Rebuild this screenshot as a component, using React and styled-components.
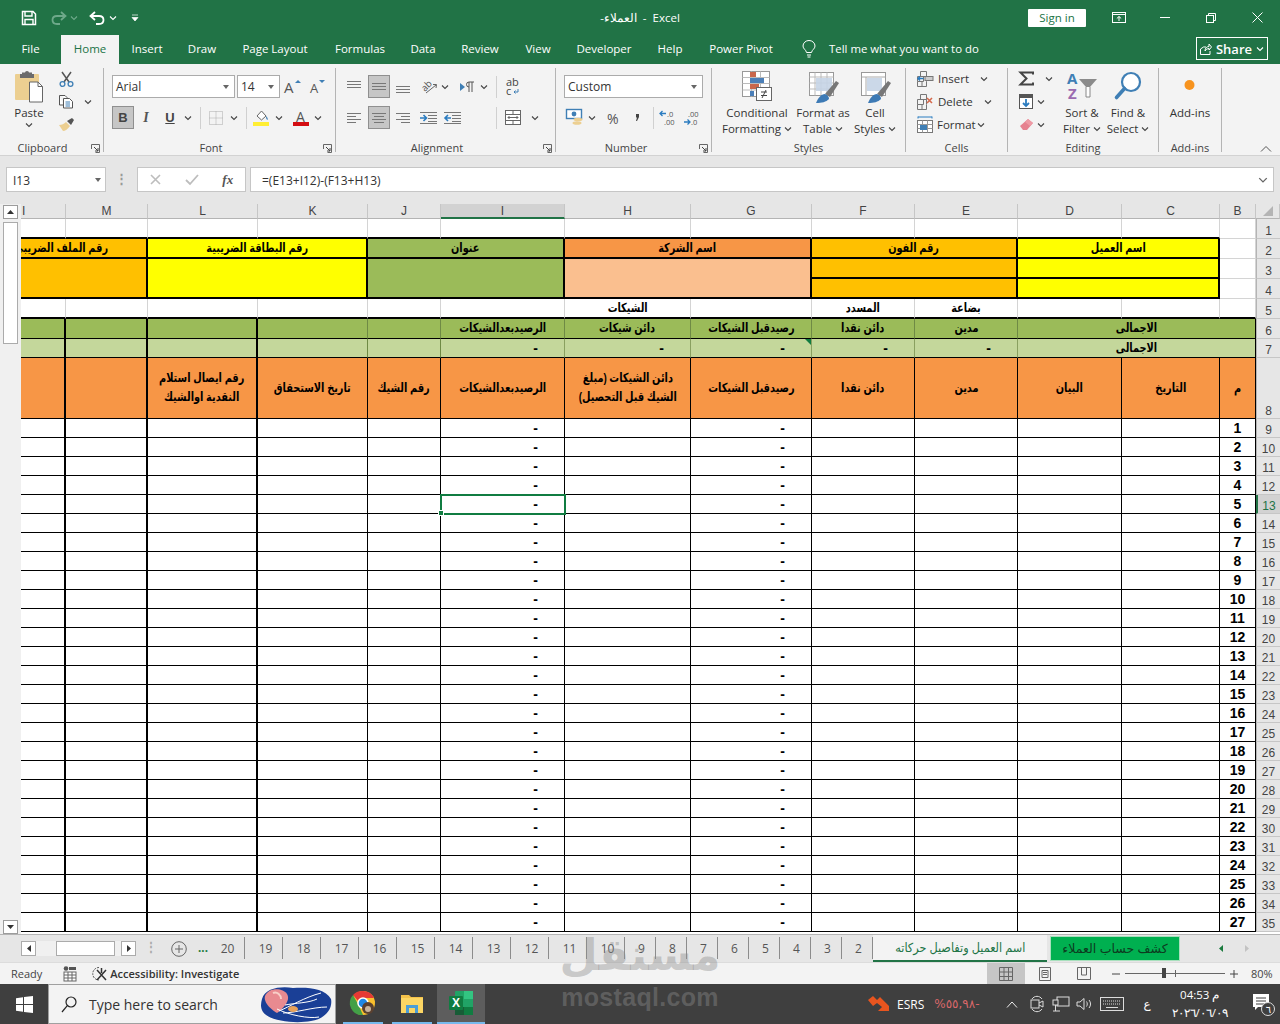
import React from "react";
import styled, { createGlobalStyle } from "styled-components";

const UI = `"Open Sans","Noto Sans",sans-serif`;
const AR = `"Liberation Sans","DejaVu Sans","Noto Sans",sans-serif`;
const GREEN = "#217346";

const Global = createGlobalStyle`
  html, body { margin: 0; padding: 0; background: #e6e6e6; }
  * { box-sizing: border-box; }
`;

const Page = styled.div`
  position: relative; width: 1280px; height: 1024px; overflow: hidden;
  display: flex; flex-direction: column; font-family: ${UI}; color: #333; font-size: 11.5px; background: #e6e6e6;
`;
const Ico = styled.svg`display: block; flex-shrink: 0; overflow: visible;`;
const Chev = ({ c = "#444", s = 8 }) => (
  <Ico width={s} height={s} viewBox="0 0 8 8"><path d="M1 2.5 4 5.5 7 2.5" fill="none" stroke={c} strokeWidth="1.1" /></Ico>
);

/* ---------- title bar ---------- */
const TitleBar = styled.div`
  height: 35px; background: ${GREEN}; color: #fff; display: grid; grid-template-columns: 1fr auto 1fr; align-items: center;
`;
const Qat = styled.div`display: flex; align-items: center; padding-left: 20px;`;
const Tool = styled.div`
  display: flex; align-items: center; justify-content: center; flex-shrink: 0; height: ${p => p.$h || 23}px;
  width: ${p => p.$w || 20}px; margin-left: ${p => p.$ml || 0}px; color: #444;
  ${p => p.$on && `background: #c6c6c6; border: 1px solid #8f8f8f;`}
`;
const DocTitle = styled.div`font: 11.5px ${UI}; color: #fff; direction: ltr; unicode-bidi: plaintext; white-space: pre;`;
const WinCtl = styled.div`display: flex; align-items: center; justify-content: flex-end;`;
const SignIn = styled.div`
  width: 58px; height: 18px; background: #fff; color: ${GREEN}; font-size: 11.5px; line-height: 18px; text-align: center; border-radius: 1px; margin-right: 10px;
`;
const WinBtn = styled.div`width: 46px; height: 30px; display: flex; align-items: center; justify-content: center;`;

/* ---------- tabs ---------- */
const Tabs = styled.div`height: 29px; background: ${GREEN}; display: flex; align-items: stretch;`;
const Tab = styled.div`
  width: ${p => p.$w}px; display: flex; align-items: center; justify-content: center; font-size: 11.5px; padding-bottom: 2px;
  color: ${p => (p.$on ? GREEN : "#fff")}; background: ${p => (p.$on ? "#f3f3f3" : "transparent")};
`;
const TellMe = styled.div`display: flex; align-items: center; gap: 13px; margin-left: 15px; color: #fff; font-size: 11.4px; padding-bottom: 2px;`;
const Share = styled.div`
  margin: 2px 12px 4px auto; width: 72px; height: 23px; border: 1px solid #fff; color: #fff; font-weight: 600; font-size: 13px;
  display: flex; align-items: center; justify-content: center; gap: 4px;
`;

/* ---------- ribbon ---------- */
const Ribbon = styled.div`height: 92px; background: #f3f3f3; display: flex; align-items: center; position: relative; border-bottom: 1px solid #d2d2d2;`;
const Group = styled.div`width: ${p => p.$w}px; height: 91px; display: flex; flex-direction: column; flex-shrink: 0;`;
const GroupBody = styled.div`flex: 1; display: flex; padding-left: ${p => p.$pl || 0}px; min-height: 0;`;
const GroupLabel = styled.div`
  height: 17px; position: relative; text-align: center; font-size: 11px; color: #444; line-height: 19px; padding-right: ${p => p.$pr || 0}px;
`;
const Launcher = styled.span`position: absolute; right: 3px; top: 6px;`;
const Divider = styled.div`width: 1px; height: 84px; background: #b4b4b4; flex-shrink: 0;`;
const Rows = styled.div`display: flex; flex-direction: column; gap: 8px; padding-top: 11px;`;
const Row = styled.div`display: flex; align-items: center; height: 23px;`;
const Stack = styled.div`display: flex; flex-direction: column; padding-top: 3px; width: ${p => p.$w}px; flex-shrink: 0;`;
const Sep = styled.div`width: 1px; height: 22px; background: #d0d0d0; flex-shrink: 0; margin-left: ${p => p.$ml || 0}px;`;
const Field = styled.div`
  width: ${p => p.$w}px; height: 23px; margin-left: ${p => p.$ml || 0}px; background: #fff; border: 1px solid #ababab; flex-shrink: 0;
  display: flex; align-items: center; justify-content: space-between; padding: 0 5px 0 3px; font-size: 12px; color: #333;
`;
const Caret = styled.span`width: 0; height: 0; border-left: 3.5px solid transparent; border-right: 3.5px solid transparent; border-top: 4px solid #666;`;
const Large = styled.div`
  width: ${p => p.$w}px; margin-left: ${p => p.$ml || 0}px; flex-shrink: 0; display: flex; flex-direction: column; align-items: center;
  padding-top: 7px; font-size: 11.5px; line-height: 16px; color: #333; text-align: center; white-space: nowrap;
`;
const LargeIcon = styled.div`height: 34px; display: flex; align-items: flex-start; justify-content: center;`;
const LineChev = styled.div`display: flex; align-items: center; gap: 3px; justify-content: center;`;
const SmallText = styled.span`width: ${p => p.$w}px; margin-left: 4px; font-size: 11.5px; flex-shrink: 0;`;
const Bold = styled.span`font: 700 13px "Liberation Sans", sans-serif; color: #444;`;
const Ital = styled.span`font: italic 700 14px "Liberation Serif", serif; color: #555;`;
const Under = styled.span`font: 700 13px "Liberation Sans", sans-serif; color: #444; text-decoration: underline;`;
const Collapse = styled.div`position: absolute; right: 8px; bottom: 2px;`;

/* ---------- formula ---------- */
const FormulaBar = styled.div`height: 48px; background: #e6e6e6; padding: 11px 6px 12px 6px; display: flex; align-items: stretch;`;
const NameBox = styled.div`
  width: 100px; background: #fff; border: 1px solid #c6c6c6; display: flex; align-items: center; justify-content: space-between;
  padding: 1px 4px 0 6px; font: 12px ${UI}; color: #333;
`;
const Dots = styled.div`width: 31px; color: #999; text-align: center; font-size: 13px; font-weight: 700; line-height: 22px;`;
const FxBox = styled.div`width: 109px; background: #fff; border: 1px solid #c6c6c6; display: flex; align-items: center; justify-content: space-around;`;
const Fx = styled.span`font: italic 700 13px "Liberation Serif", serif; color: #555;`;
const Formula = styled.div`
  flex: 1; margin-left: 4px; background: #fff; border: 1px solid #c6c6c6; display: flex; align-items: center; justify-content: space-between;
  padding: 1px 5px 0 11px; font: 12px ${UI}; color: #333;
`;

/* ---------- sheet ---------- */
const SheetWrap = styled.div`display: flex; height: 730px;`;
const VScroll = styled.div`width: 21px; flex-shrink: 0; padding: 1px 0 0 3px; display: flex; flex-direction: column; background: #f0f0f0; position: relative;`;
const SBtn = styled.div`width: 15px; height: 14px; background: #fff; border: 1px solid #9c9c9c; display: flex; align-items: center; justify-content: center;`;
const Thumb = styled.div`width: 15px; height: 122px; margin-top: 3px; background: #fff; border: 1px solid #ababab; flex-shrink: 0;`;
const SDown = styled(SBtn)`margin-top: auto; margin-bottom: 0;`;
const COLS = [45, 82, 110, 110, 73, 124, 126, 121, 103, 103, 104, 98, 36, 24];
const ROWS = [15, 20, 20, 20, 20, 20, 20, 19, 61, ...Array(27).fill(19)];
const Grid = styled.div`
  flex: 1; overflow: hidden; background: #fff; display: grid;
  grid-template-columns: ${COLS.map(c => c + "px").join(" ")};
  grid-template-rows: ${ROWS.map(c => c + "px").join(" ")};
`;
const ColHead = styled.div`
  background: ${p => (p.$on ? "#d2d2d2" : "#e6e6e6")}; border-right: 1px solid #c6c6c6;
  border-bottom: ${p => (p.$on ? `2px solid ${GREEN}` : "1px solid #b4b4b4")};
  font: 12px "Liberation Sans", sans-serif; color: #444; display: flex; align-items: center;
  justify-content: ${p => (p.$left ? "flex-start" : "center")}; padding-left: ${p => (p.$left ? 1 : 0)}px; line-height: 14px;
`;
const RowHead = styled.div`
  background: ${p => (p.$on ? "#d2d2d2" : "#e6e6e6")}; border-bottom: 1px solid #c6c6c6; border-left: ${p => (p.$on ? `2px solid ${GREEN}` : "1px solid #b4b4b4")};
  font: 12px "Liberation Sans", sans-serif; color: ${p => (p.$on ? GREEN : "#444")}; display: flex; align-items: flex-end; justify-content: center;
`;
const LIGHT = "1px solid #d4d4d4";
const THIN = "1px solid #000";
const THICK = "2px solid #000";
const Cell = styled.div`
  grid-column: span ${p => p.$span || 1}; grid-row: span ${p => p.$rows || 1}; position: relative; overflow: hidden;
  background: ${p => p.$bg || "#fff"}; border-right: ${p => p.$br || LIGHT}; border-bottom: ${p => p.$bb || LIGHT};
  display: flex; align-items: center; justify-content: ${p => p.$just || "center"}; direction: rtl; text-align: center;
  font: 700 12.5px/19px ${AR}; color: #000; white-space: nowrap; padding-right: ${p => p.$pr || 0}px;
`;
const Txt = styled.span`
  display: inline-block; flex-shrink: 0; transform: scaleX(${p => p.$sx || 0.78}); transform-origin: ${p => p.$origin || "center"};
`;
const Dash = styled(Cell)`justify-content: flex-start; padding-right: 26px; font: 700 14px "Liberation Sans", sans-serif;`;
const Num = styled(Cell)`font: 700 14px "Liberation Sans", sans-serif; direction: ltr;`;
const Selected = styled(Cell)`overflow: visible; outline: 2px solid #107c41; outline-offset: -1px; z-index: 2; justify-content: flex-start; padding-right: 26px; font: 700 14px "Liberation Sans", sans-serif;`;
const Handle = styled.span`position: absolute; left: -3px; bottom: -3px; width: 6px; height: 6px; background: #107c41; border: 1px solid #fff;`;
const Tri = styled.span`position: absolute; right: 0; top: 0; width: 0; height: 0; border-top: 6px solid #107c41; border-left: 6px solid transparent;`;

const Y = "#ffff00", O = "#ffc000", G = "#9bbb59", F = "#f79646", P = "#fabf8f", LG = "#c4d79b";
const letters = ["I", "M", "L", "K", "J", "I", "H", "G", "F", "E", "D", "C", "B"];
const headTexts8 = [
  "", "", <>رقم ايصال استلام<br />النقدية اوالشيك</>, "تاريخ الاستحقاق", "رقم الشيك", "الرصيدبعدالشيكات",
  <>دائن الشيكات (مبلغ<br />الشيك قبل التحصيل)</>, "رصيدقبل الشيكات", "دائن نقدا", "مدين", "البيان", "التاريخ", "م",
];
const vert = i => (i <= 2 ? THICK : THIN);
const vertSoft = i => (i <= 2 ? THICK : "1px solid #6f8a45");

const SheetGrid = () => (
  <Grid>
    {letters.map((l, i) => <ColHead key={i} $on={i === 5} $left={i === 0}>{l}</ColHead>)}
    <ColHead>
      <Ico width="12" height="12" viewBox="0 0 12 12"><path d="M11 1V11H1Z" fill="#b4b4b4" /></Ico>
    </ColHead>

    {/* row 1 */}
    {[...Array(12)].map((_, i) => <Cell key={i} $bb={THICK} />)}
    <Cell /><RowHead>1</RowHead>

    {/* row 2 */}
    <Cell $span={2} $bg={O} $br={THICK} $bb={THICK} $just="flex-start" $pr={38}><Txt $origin="right">رقم الملف الضريبي</Txt></Cell>
    <Cell $span={2} $bg={Y} $br={THICK} $bb={THICK}><Txt>رقم البطاقة الضريبية</Txt></Cell>
    <Cell $span={2} $bg={G} $br={THICK} $bb={THICK}><Txt>عنوان</Txt></Cell>
    <Cell $span={2} $bg={F} $br={THICK} $bb={THICK}><Txt>اسم الشركة</Txt></Cell>
    <Cell $span={2} $bg={O} $br={THICK} $bb={THICK}><Txt>رقم الفون</Txt></Cell>
    <Cell $span={2} $bg={Y} $br={THICK} $bb={THICK}><Txt>اسم العميل</Txt></Cell>
    <Cell /><RowHead>2</RowHead>

    {/* rows 3-4 */}
    <Cell $span={2} $rows={2} $bg={O} $br={THICK} $bb={THICK} />
    <Cell $span={2} $rows={2} $bg={Y} $br={THICK} $bb={THICK} />
    <Cell $span={2} $rows={2} $bg={G} $br={THICK} $bb={THICK} />
    <Cell $span={2} $rows={2} $bg={P} $br={THICK} $bb={THICK} />
    <Cell $span={2} $bg={O} $br={THICK} $bb={THICK} />
    <Cell $span={2} $bg={Y} $br={THICK} $bb={THICK} />
    <Cell /><RowHead>3</RowHead>
    <Cell $span={2} $bg={O} $br={THICK} $bb={THICK} />
    <Cell $span={2} $bg={Y} $br={THICK} $bb={THICK} />
    <Cell /><RowHead>4</RowHead>

    {/* row 5 */}
    {["", "", "", "", "", "", "الشيكات", "", "المسدد", "بضاعة", "", "", ""].map((t, i) => <Cell key={i} $bb={THICK}>{t && <Txt>{t}</Txt>}</Cell>)}
    <RowHead>5</RowHead>

    {/* row 6 */}
    {["", "", "", "", "", "الرصيدبعدالشيكات", "دائن شيكات", "رصيدقبل الشيكات", "دائن نقدا", "مدين"].map((t, i) => (
      <Cell key={i} $bg={G} $bb={THIN} $br={vertSoft(i)}>{t && <Txt>{t}</Txt>}</Cell>
    ))}
    <Cell $span={3} $bg={G} $bb={THIN} $br={THIN}><Txt>الاجمالى</Txt></Cell>
    <RowHead>6</RowHead>

    {/* row 7 */}
    {[0, 1, 2, 3, 4].map(i => <Cell key={i} $bg={LG} $bb={THIN} $br={vertSoft(i)} />)}
    <Dash $bg={LG} $bb={THIN} $br="1px solid #8aa060">-</Dash>
    <Dash $bg={LG} $bb={THIN} $br="1px solid #8aa060">-</Dash>
    <Dash $bg={LG} $bb={THIN} $br="1px solid #8aa060"><Tri />-</Dash>
    <Dash $bg={LG} $bb={THIN} $br="1px solid #8aa060">-</Dash>
    <Dash $bg={LG} $bb={THIN} $br="1px solid #8aa060">-</Dash>
    <Cell $span={3} $bg={LG} $bb={THIN} $br={THIN}><Txt>الاجمالى</Txt></Cell>
    <RowHead>7</RowHead>

    {/* row 8 */}
    {headTexts8.map((t, i) => <Cell key={i} $bg={F} $bb={THIN} $br={vert(i)}>{t && <Txt>{t}</Txt>}</Cell>)}
    <RowHead>8</RowHead>

    {/* data */}
    {[...Array(27)].map((_, r) => (
      <React.Fragment key={r}>
        {letters.map((_, i) => {
          if (i === 12) return <Num key={i} $bb={THIN} $br={THIN}>{r + 1}</Num>;
          if (i === 5 && r === 4) return <Selected key={i} $bb={THIN} $br={THIN}><Handle />-</Selected>;
          if (i === 5 || i === 7) return <Dash key={i} $bb={THIN} $br={THIN}>-</Dash>;
          return <Cell key={i} $bb={THIN} $br={vert(i)} />;
        })}
        <RowHead $on={r === 4}>{r + 9}</RowHead>
      </React.Fragment>
    ))}
  </Grid>
);

/* ---------- sheet tabs ---------- */
const TabBar = styled.div`height: 28px; background: #e6e6e6; border-top: 1px solid #b4b4b4; display: flex; align-items: stretch; padding-left: 21px;`;
const NavBox = styled.div`width: 15px; height: 15px; margin-top: 6px; background: #fff; border: 1px solid #ababab; display: flex; align-items: center; justify-content: center; flex-shrink: 0;`;
const HTrack = styled.div`width: 85px; height: 15px; margin-top: 6px; background: #f0f0f0; padding-left: 20px; flex-shrink: 0;`;
const HThumb = styled.div`width: 59px; height: 15px; background: #fff; border: 1px solid #ababab;`;
const TabDots = styled.div`width: 30px; color: #aaa; text-align: center; line-height: 24px; font-weight: 700; flex-shrink: 0;`;
const More = styled.div`width: 20px; text-align: center; color: #1a7a3d; font-weight: 700; line-height: 26px; margin: 0 -6px 0 6px; flex-shrink: 0;`;
const NumTab = styled.div`
  width: ${p => p.$w}px; flex-shrink: 0; height: 22px; margin-top: 2px; border-right: 1px solid #8c8c8c;
  display: flex; align-items: center; justify-content: center; padding-left: ${p => p.$pl}px; font: 12px ${UI}; color: #555;
`;
const ActiveTab = styled.div`
  width: 174px; flex-shrink: 0; height: 27px; background: #f3f3f3; border-bottom: 2px solid ${GREEN}; color: ${GREEN};
  display: flex; align-items: center; justify-content: center; font: 12.5px ${AR}; direction: rtl; white-space: nowrap;
`;
const ColorTab = styled.div`
  width: 130px; margin-left: 3px; flex-shrink: 0; height: 25px; background: #00b050; border: 1px solid #a8e0bd; color: #0d3b1f; margin-top: 1px;
  display: flex; align-items: center; justify-content: center; font: 12.5px ${AR}; direction: rtl; white-space: nowrap;
`;
const TabArrows = styled.div`display: flex; gap: 22px; margin-left: 39px; align-items: center;`;

/* ---------- status bar ---------- */
const StatusBar = styled.div`height: 22px; background: #f3f3f3; display: flex; align-items: center; padding-left: 11px; font-size: 11px; color: #444; border-top: 1px solid #dcdcdc;`;
const Access = styled.div`display: flex; align-items: center; gap: 2px; margin-left: 15px; font-weight: 600; color: #333; font-size: 11px;`;
const Views = styled.div`margin-left: auto; display: flex; flex-shrink: 0;`;
const ViewBtn = styled.div`width: ${p => p.$w}px; height: 21px; display: flex; align-items: center; justify-content: center; background: ${p => (p.$on ? "#c6c6c6" : "transparent")}; flex-shrink: 0;`;
const ZoomMinus = styled.span`margin-left: 9px; display: flex;`;
const Slider = styled.div`width: 100px; height: 1px; background: #666; position: relative; margin: 0 5px;`;
const SliderThumb = styled.span`position: absolute; left: 37px; top: -5px; width: 4px; height: 10px; background: #444;`;
const SliderTick = styled.span`position: absolute; left: 50px; top: -3px; width: 1px; height: 7px; background: #666;`;
const Zoom = styled.span`margin-left: 13px; width: 29px; font-size: 11px; color: #444;`;

/* ---------- taskbar ---------- */
const Taskbar = styled.div`height: 40px; background: #3f3f3f; display: flex; align-items: stretch; color: #fff;`;
const StartBtn = styled.div`width: 48px; display: flex; align-items: center; justify-content: center; flex-shrink: 0;`;
const Search = styled.div`width: 288px; background: #f3f3f3; border: 1px solid #a0a0a0; display: flex; align-items: center; flex-shrink: 0; padding-left: 12px; color: #333; font: 14px ${UI}; gap: 12px;`;
const SearchText = styled.span`white-space: nowrap; width: 158px;`;
const TaskIcon = styled.div`
  width: ${p => p.$w}px; margin-left: ${p => p.$ml || 0}px; flex-shrink: 0; display: flex; align-items: center; justify-content: center;
  background: ${p => (p.$on ? "#5d5d5d" : "transparent")}; border-bottom: 2px solid #76b9ed;
`;
const Tray = styled.div`margin-left: 383px; display: flex; align-items: center; flex: 1;`;
const TrayText = styled.span`font: ${p => p.$fs || 12}px ${p => p.$f || UI}; color: ${p => p.$c || "#fff"}; margin-left: ${p => p.$ml || 0}px; white-space: nowrap; flex-shrink: 0;`;
const Clock = styled.div`margin-left: 16px; width: 66px; display: flex; flex-direction: column; align-items: center; font: 11.5px ${UI}; line-height: 18px; flex-shrink: 0;`;

/* ---------- watermark ---------- */
const Watermark = styled.div`
  position: absolute; left: 560px; top: 927px; width: 160px; pointer-events: none; text-align: center; color: rgba(140, 140, 140, 0.42);
  display: flex; flex-direction: column; align-items: center;
`;
const WmAr = styled.div`font: 700 44px/56px "DejaVu Sans", sans-serif; direction: rtl;`;
const WmEn = styled.div`font: 700 25px/28px "Liberation Sans", sans-serif; letter-spacing: .3px;`;

/* ---------- icons ---------- */
const W = "#fff";
const SaveI = () => <Ico width="16" height="16" viewBox="0 0 16 16"><path d="M1.5 1.5H12L14.5 4V14.5H1.5Z" fill="none" stroke={W} strokeWidth="1.5" /><path d="M4 1.5V6H11V1.5M4 14.5V9.5H12V14.5" fill="none" stroke={W} strokeWidth="1.4" /></Ico>;
const UndoI = ({ c = W, flip }) => <Ico width="16" height="14" viewBox="0 0 16 14" style={flip ? { transform: "scaleX(-1)" } : undefined}><path d="M6 1 1.5 5 6 9M2 5H10C13 5 14.5 7 14.5 9S13 13 10 13H7" fill="none" stroke={c} strokeWidth="1.8" /></Ico>;
const PasteI = () => (
  <Ico width="30" height="33" viewBox="0 0 30 33">
    <rect x="1" y="3" width="24" height="26" rx="1" fill="#eccf91" />
    <path d="M8 4H18V1.5H15A2 1.5 0 0 0 11 1.5H8Z" fill="#6b6b6b" /><rect x="6" y="3" width="14" height="4" fill="#6b6b6b" />
    <path d="M15.5 11H24L28.5 15.5V31H15.5Z" fill="#fff" stroke="#666" /><path d="M24 11V15.5H28.5" fill="none" stroke="#666" />
  </Ico>
);
const CutI = () => <Ico width="15" height="16" viewBox="0 0 15 16"><path d="M3 1 10 11M12 1 5 11" stroke="#555" strokeWidth="1.5" /><circle cx="3.5" cy="13" r="2.4" fill="none" stroke="#3f7fb5" strokeWidth="1.3" /><circle cx="11.5" cy="13" r="2.4" fill="none" stroke="#3f7fb5" strokeWidth="1.3" /></Ico>;
const CopyI = () => <Ico width="16" height="15" viewBox="0 0 16 15"><path d="M1.5 1.5H7L9 3.5V4M1.5 1.5V11H5" fill="#fff" stroke="#555" /><path d="M5.5 4.5H11.5L14.5 7.5V14H5.5Z" fill="#fff" stroke="#555" /><path d="M7.5 8H12M7.5 10H12M7.5 12H12" stroke="#3f7fb5" /></Ico>;
const BrushI = () => <Ico width="17" height="15" viewBox="0 0 17 15"><path d="M1 8C4 8 6 7 8 5L12 9C10 12 7 14 5 14Z" fill="#eccf91" /><path d="M9 4 13 8 16 3 14 1Z" fill="#555" /></Ico>;
const LaunchI = () => <Ico width="9" height="9" viewBox="0 0 9 9"><path d="M.5 5V.5H8.5V8.5H4.5" fill="none" stroke="#666" /><path d="M3 3 7 7M7 4V7H4" fill="none" stroke="#444" /></Ico>;
const GrowI = ({ up }) => <Ico width="18" height="15" viewBox="0 0 18 15"><text x={up ? 0 : 2} y="14" fontFamily="Open Sans" fontSize={up ? 15 : 13} fill="#555">A</text><path d={up ? "M11 4 14 1 17 4Z" : "M11 1H17L14 4Z"} fill="#3f7fb5" /></Ico>;
const BordersI = () => <Ico width="14" height="14" viewBox="0 0 14 14"><rect x=".5" y=".5" width="13" height="13" fill="none" stroke="#aaa" strokeDasharray="1 1" /><path d="M7 .5V13.5M.5 7H13.5" stroke="#aaa" strokeDasharray="1 1" /></Ico>;
const FillI = () => <Ico width="17" height="17" viewBox="0 0 17 17"><path d="M4 7 8.5 2 13 7 8.5 11Z" fill="#fff" stroke="#666" /><path d="M13 7C15 9 15 10 14.5 11 13 10 13 8.5 13 7Z" fill="#3f7fb5" /><rect y="13" width="16" height="4" fill="#ffee33" /></Ico>;
const ColorI = () => <Ico width="17" height="17" viewBox="0 0 17 17"><text x="3" y="12.5" fontFamily="Open Sans" fontSize="14" fill="#555">A</text><rect y="13" width="16" height="4" fill="#d40d12" /></Ico>;
const Lines = ({ ys, x1s, x2s, w = 14 }) => <Ico width={w} height="12" viewBox={`0 0 ${w} 12`}>{ys.map((y, i) => <line key={i} x1={x1s[i]} x2={x2s[i]} y1={y + .5} y2={y + .5} stroke="#777" />)}</Ico>;
const AlignLines = ({ kind }) => {
  const w = 14;
  if (kind === "left") return <Lines ys={[1, 4, 7, 10]} x1s={[0, 0, 0, 0]} x2s={[14, 9, 14, 9]} w={w} />;
  if (kind === "center") return <Lines ys={[1, 4, 7, 10]} x1s={[0, 2, 0, 2]} x2s={[14, 12, 14, 12]} w={w} />;
  if (kind === "right") return <Lines ys={[1, 4, 7, 10]} x1s={[0, 5, 0, 5]} x2s={[14, 14, 14, 14]} w={w} />;
  return <Lines ys={[2, 5, 8]} x1s={[0, 0, 0]} x2s={[14, 14, 14]} w={w} />;
};
const OrientI = () => <Ico width="17" height="17" viewBox="0 0 17 17"><text x="1" y="11" transform="rotate(-45 6 9)" fontFamily="Open Sans" fontSize="9.5" fill="#555">ab</text><path d="M5 15 15 7M12 6.5 15.5 6.5 15 10" fill="none" stroke="#666" /></Ico>;
const RtlI = () => <Ico width="16" height="12" viewBox="0 0 16 12"><path d="M1 2 6 6 1 10Z" fill="#3f7fb5" /><path d="M10 11V1H15M13 1V11M10 1A2.5 2.5 0 0 0 10 6" fill="none" stroke="#555" /></Ico>;
const WrapI = () => <Ico width="14" height="20" viewBox="0 0 14 20"><text x="0" y="9" fontFamily="Open Sans" fontSize="11" fill="#444">ab</text><text x="0" y="18" fontFamily="Open Sans" fontSize="11" fill="#444">c</text><path d="M12 12V15H8M9.5 13.5 8 15 9.5 16.5" fill="none" stroke="#3f7fb5" /></Ico>;
const IndentI = ({ out }) => <Ico width="17" height="12" viewBox="0 0 17 12"><path d="M0 .5H17M8 3.5H17M8 6.5H17M8 9.5H17M0 11.5H17" stroke="#777" /><path d={out ? "M7 6H1M4 3 1 6 4 9" : "M0 6H6M3.5 3 6.5 6 3.5 9"} fill="none" stroke="#2b7cc0" strokeWidth="1.6" /></Ico>;
const MergeI = () => <Ico width="16" height="15" viewBox="0 0 16 15"><rect x=".5" y=".5" width="15" height="14" fill="#fff" stroke="#666" /><path d="M.5 4.5H15.5M.5 10.5H15.5M8 .5V4.5M8 10.5V14.5M3 7.5H13M4.5 6 3 7.5 4.5 9M11.5 6 13 7.5 11.5 9" fill="none" stroke="#666" /></Ico>;
const CurrI = () => <Ico width="18" height="17" viewBox="0 0 18 17"><rect x=".5" y=".5" width="15" height="9" fill="#fff" stroke="#3f7fb5" strokeWidth="1.4" /><circle cx="8" cy="5" r="2.4" fill="#3f7fb5" /><ellipse cx="12" cy="10.5" rx="4.5" ry="1.8" fill="#eccf91" /><ellipse cx="11" cy="14" rx="4.5" ry="1.8" fill="#eccf91" /></Ico>;
const DecI = ({ inc }) => (
  <Ico width="17" height="16" viewBox="0 0 17 16">
    <text x={inc ? 7 : 4} y="7" fontFamily="Open Sans" fontSize="7.5" fill="#555">{inc ? ".0" : ".00"}</text>
    <text x={inc ? 4 : 7} y="15" fontFamily="Open Sans" fontSize="7.5" fill="#555">{inc ? ".00" : ".0"}</text>
    <path d={inc ? "M6 3.5H0M2.5 1 0 3.5 2.5 6" : "M0 12H6M3.5 9.5 6 12 3.5 14.5"} fill="none" stroke="#2b7cc0" strokeWidth="1.3" />
  </Ico>
);
const CondI = () => (
  <Ico width="31" height="31" viewBox="0 0 31 31">
    <rect x=".5" y=".5" width="27" height="25" fill="#fff" stroke="#999" />
    <path d="M9.5 .5V25.5M18.5 .5V25.5M.5 6.5H27.5M.5 12.5H27.5M.5 19H27.5" stroke="#bbb" />
    <rect x="8" y="1" width="6" height="5" fill="#c9674c" /><rect x="8" y="7" width="14" height="5" fill="#4b7fb8" />
    <rect x="8" y="13" width="9" height="5" fill="#c9674c" /><rect x="8" y="20" width="4" height="5" fill="#4b7fb8" />
    <rect x="14.5" y="16.5" width="15" height="13" fill="#fff" stroke="#666" /><path d="M19 21H25M19 24.5H25M24 19 20 27" stroke="#444" fill="none" />
  </Ico>
);
const TableI = ({ plain }) => (
  <Ico width="30" height="32" viewBox="0 0 30 32" style={{ marginTop: "1px", marginLeft: "2px" }}>
    <rect x=".5" y=".5" width="24" height="23" fill="#fff" stroke="#999" />
    {plain ? <path d="M.5 5H24.5M5 5V23.5" stroke="#aaa" /> : <path d="M.5 5H24.5M.5 11H24.5M.5 17H24.5M6 .5V23.5M12 .5V23.5M18 .5V23.5" stroke="#bbb" />}
    <rect x={plain ? 6 : 7} y="6" width={plain ? 15 : 16} height="13" fill="#c5d4e6" opacity=".9" />
    <path d="M16 22 27 9 30 11 21 25Z" fill="#777" />
    <path d="M7 31C9 26 12 22 16 22 19 23 20 25 20 27 17 30 13 31 7 31Z" fill="#3d7ab5" />
  </Ico>
);
const InsI = ({ mode }) => (
  <Ico width="17" height="16" viewBox="0 0 17 16">
    <path d="M3.5 .5H9.5V5.5H3.5ZM.5 5.5H6.5V10.5H.5ZM6.5 5.5H9.5V10.5M.5 10.5V15.5H9.5V10.5M5 10.5V15.5" fill="none" stroke="#777" />
    {mode === "ins" ? <><rect x="8" y="5.5" width="8" height="4" fill="#ccc" stroke="#777" /><path d="M1 7.5H6.5M3 5.5 1 7.5 3 9.5" fill="none" stroke="#2b7cc0" strokeWidth="1.4" /></> : <path d="M10 4 15 9M15 4 10 9" stroke="#d4694c" strokeWidth="1.6" />}
  </Ico>
);
const FmtI = () => <Ico width="16" height="17" viewBox="0 0 16 17"><path d="M1 1H15M1 .5V2.5M15 .5V2.5" stroke="#2b7cc0" /><rect x=".5" y="4.5" width="15" height="12" fill="#fff" stroke="#777" /><path d="M.5 8.5H15.5M.5 12.5H15.5M5.5 4.5V16.5M10.5 4.5V16.5" stroke="#999" /><rect x="3" y="9" width="7" height="5" fill="#3f7fb5" /></Ico>;
const SumI = () => <Ico width="15" height="15" viewBox="0 0 15 15"><path d="M14 3.5V1.5H1.5L7.5 7.5 1.5 13.5H14V11.5" fill="none" stroke="#444" strokeWidth="2" /></Ico>;
const FillDown = () => <Ico width="14" height="15" viewBox="0 0 14 15"><rect x=".5" y=".5" width="13" height="14" fill="#fff" stroke="#555" /><rect width="14" height="4" fill="#555" /><path d="M7 5V12M4 9 7 12 10 9" fill="none" stroke="#2b7cc0" strokeWidth="1.8" /></Ico>;
const EraserI = () => <Ico width="15" height="13" viewBox="0 0 15 13"><path d="M9 1 14 5 8 12H4L1 8Z" fill="#e6818f" /><path d="M9 1 14 5 11 8 6 4Z" fill="#ee9aa5" /></Ico>;
const SortI = () => (
  <Ico width="30" height="30" viewBox="0 0 30 30">
    <text x="0" y="13" fontFamily="Open Sans" fontWeight="700" fontSize="15" fill="#3f7fb5">A</text>
    <text x="1" y="28" fontFamily="Open Sans" fontWeight="700" fontSize="15" fill="#9b6bb0">Z</text>
    <path d="M12 8H30L23 16V26H19V16Z" fill="#8b8b8b" /><path d="M19 16V26H23V16" fill="#fff" stroke="#888" />
  </Ico>
);
const FindI = () => <Ico width="28" height="29" viewBox="0 0 28 29"><circle cx="17" cy="11" r="9" fill="#fff" stroke="#3f7fb5" strokeWidth="2.2" /><path d="M10.5 17.5 2.5 26.5" stroke="#3f7fb5" strokeWidth="3.6" strokeLinecap="round" /></Ico>;
const BulbI = () => <Ico width="14" height="18" viewBox="0 0 14 18"><path d="M4.5 12.5C4 9.5 1 9 1 6A6 5.5 0 0 1 13 6C13 9 10 9.5 9.5 12.5ZM5 15H9M5.5 17H8.5" fill="none" stroke="#fff" /></Ico>;
const ShareI = () => <Ico width="12" height="12" viewBox="0 0 12 12"><path d="M6 4H3.5L.5 6V11.5H10V8M5 8C5 5 7 3.5 9 3.5V1L11.5 4 9 7V5.5C7.5 5.5 6 6.5 5 8Z" fill="none" stroke="#fff" /></Ico>;
const AccI = () => <Ico width="16" height="16" viewBox="0 0 16 16"><path d="M7 1.5A6 6 0 1 0 7 14" fill="none" stroke="#555" strokeDasharray="2 1" /><path d="M5 4 14 14M14 4 5 14M9.5 2V7" stroke="#333" strokeWidth="1.5" /></Ico>;
const MacroI = () => <Ico width="14" height="16" viewBox="0 0 14 16"><rect x="1" y="6" width="12" height="9" fill="#fff" stroke="#666" /><path d="M1 9H13M1 12H13M5 6V15M9 6V15" stroke="#666" /><circle cx="3" cy="2.5" r="2.3" fill="#555" /><rect x="6" y="1" width="7" height="3" fill="#555" /></Ico>;
const WinLogo = () => <Ico width="17" height="17" viewBox="0 0 17 17"><path d="M0 2.3 7 1.3V8H0ZM8 1.1 17 0V8H8ZM0 9H7V15.7L0 14.7ZM8 9H17V17L8 15.9Z" fill="#fff" /></Ico>;
const SearchI = () => <Ico width="16" height="17" viewBox="0 0 16 17"><circle cx="10" cy="6" r="5" fill="none" stroke="#222" strokeWidth="1.2" /><path d="M6.3 9.7 1 16" stroke="#222" strokeWidth="1.2" /></Ico>;
const Jelly = () => (
  <Ico width="74" height="38" viewBox="0 0 74 38">
    <path d="M3 14C6 3 22 1 34 3 48 2 66 3 72 14 74 24 66 34 52 36 36 39 10 36 4 27 1 22 2 18 3 14Z" fill="#1a3f96" />
    <path d="M6 11C10 2 24 3 28 9 32 15 24 24 18 28 14 26 4 18 6 11Z" fill="#e88a90" />
    <path d="M14 8C18 6 22 10 22 14" fill="none" stroke="#f8cfc8" strokeWidth="2" />
    <path d="M20 26C30 22 46 12 62 8M24 28C36 28 54 22 68 22M18 24C30 30 50 34 60 32M26 20C36 18 50 18 58 14" fill="none" stroke="#fff" strokeWidth="1" />
    <ellipse cx="34" cy="24" rx="5" ry="3" fill="#e9a25a" />
  </Ico>
);
const ChromeI = () => (
  <Ico width="26" height="26" viewBox="0 0 26 26">
    <circle cx="13" cy="13" r="12" fill="#fbc02d" />
    <path d="M13 1A12 12 0 0 1 24 8H13A5 5 0 0 0 8 11L3 5A12 12 0 0 1 13 1Z" fill="#e53935" />
    <path d="M3 5 8.5 15 13 25A12 12 0 0 1 3 5Z" fill="#43a047" />
    <circle cx="13" cy="13" r="5" fill="#1e88e5" stroke="#fff" strokeWidth="1.5" />
    <circle cx="18" cy="18" r="6" fill="#5a4030" /><circle cx="18" cy="19" r="3" fill="#c9b49a" />
  </Ico>
);
const FolderI = () => <Ico width="22" height="20" viewBox="0 0 22 20"><path d="M0 2H8L10 4H22V20H0Z" fill="#f4c24a" /><rect y="5" width="22" height="15" fill="#fcd664" /><rect x="5" y="12" width="12" height="8" fill="#4b9ed8" /><rect x="8" y="15" width="6" height="5" fill="#fcd664" /></Ico>;
const ExcelI = () => (
  <Ico width="26" height="26" viewBox="0 0 26 26">
    <rect x="7" y="1" width="18" height="24" rx="1" fill="#21a366" /><rect x="16" y="1" width="9" height="8" fill="#33c481" /><rect x="16" y="17" width="9" height="8" fill="#107c41" /><rect x="7" y="17" width="9" height="8" fill="#185c37" />
    <rect x="1" y="6" width="14" height="14" rx="1" fill="#107c41" />
    <text x="4" y="17" fontFamily="Liberation Sans" fontWeight="700" fontSize="12" fill="#fff">X</text>
  </Ico>
);
const EsrsI = () => <Ico width="22" height="18" viewBox="0 0 22 18"><path d="M0 5 5 1 9 5 12 2 21 11V1L21 16H10L14 12 9 8 5 11Z" fill="#e8551f" /></Ico>;
const Meet = () => <Ico width="14" height="18" viewBox="0 0 14 18"><path d="M2 4A6 6 0 0 1 12 4M2 14A6 6 0 0 0 12 14" fill="none" stroke="#ddd" /><rect x="1" y="5" width="8" height="8" fill="none" stroke="#ddd" /><path d="M9 8 13 6V12L9 10" fill="none" stroke="#ddd" /></Ico>;
const NetI = () => <Ico width="18" height="16" viewBox="0 0 18 16"><rect x="5" y="1" width="12" height="9" fill="none" stroke="#ddd" /><rect x="1" y="4" width="5" height="5" fill="#3f3f3f" stroke="#ddd" /><path d="M3.5 9V15M1 15H8" stroke="#ddd" /></Ico>;
const VolI = () => <Ico width="18" height="14" viewBox="0 0 18 14"><path d="M1 5H4L8 1.5V12.5L4 9H1Z" fill="none" stroke="#ddd" /><path d="M10.5 4.5C11.5 6 11.5 8 10.5 9.5M13 3C15 5.5 15 8.5 13 11" fill="none" stroke="#ddd" /></Ico>;
const KeyI = () => <Ico width="24" height="14" viewBox="0 0 24 14"><rect x=".5" y=".5" width="23" height="13" fill="none" stroke="#ddd" /><path d="M3 4H21M3 7H21" stroke="#ddd" strokeDasharray="1 1" /><path d="M6 10.5H18" stroke="#ddd" /></Ico>;
const NoteI = () => <Ico width="22" height="24" viewBox="0 0 22 24"><path d="M0 2H16V15H5L2 18V15H0Z" fill="#fff" /><path d="M3 6H13M3 9H13M3 12H13" stroke="#3f3f3f" /><circle cx="15" cy="17" r="6.5" fill="#3f3f3f" stroke="#ddd" /><text x="12.8" y="20.5" fontFamily="DejaVu Sans" fontSize="10" fill="#fff">٦</text></Ico>;

const App = () => (
  <Page>
    <Global />
    <TitleBar>
      <Qat>
        <Tool $w={18}><SaveI /></Tool>
        <Tool $w={18} $ml={12}><UndoI c="#6ea98a" flip /></Tool>
        <Tool $w={8} $ml={2}><Chev c="#6ea98a" /></Tool>
        <Tool $w={20} $ml={9}><UndoI /></Tool>
        <Tool $w={8} $ml={2}><Chev c={W} /></Tool>
        <Tool $w={10} $ml={13}>
          <Ico width="8" height="8" viewBox="0 0 8 8"><path d="M1 1H7M1 3.5H7L4 7Z" fill={W} stroke={W} strokeWidth=".7" /></Ico>
        </Tool>
      </Qat>
      <DocTitle dir="ltr"><span dir="rtl">العملاء-</span>  -  Excel</DocTitle>
      <WinCtl>
        <SignIn>Sign in</SignIn>
        <WinBtn><Ico width="14" height="11" viewBox="0 0 14 11"><rect x=".5" y=".5" width="13" height="10" fill="none" stroke={W} /><path d="M.5 2.5H13.5M7 9V4.5M4.8 6.5 7 4.5 9.2 6.5" fill="none" stroke={W} /></Ico></WinBtn>
        <WinBtn><Ico width="10" height="1" viewBox="0 0 10 1"><rect width="10" height="1" fill={W} /></Ico></WinBtn>
        <WinBtn><Ico width="10" height="10" viewBox="0 0 10 10"><rect x=".5" y="2.5" width="7" height="7" fill="none" stroke={W} /><path d="M2.5 2.5V.5H9.5V7.5H7.5" fill="none" stroke={W} /></Ico></WinBtn>
        <WinBtn><Ico width="11" height="11" viewBox="0 0 11 11"><path d="M.5.5 10.5 10.5M10.5.5.5 10.5" stroke={W} /></Ico></WinBtn>
      </WinCtl>
    </TitleBar>

    <Tabs>
      <Tab $w={61}>File</Tab>
      <Tab $w={58} $on>Home</Tab>
      <Tab $w={56}>Insert</Tab>
      <Tab $w={54}>Draw</Tab>
      <Tab $w={92}>Page Layout</Tab>
      <Tab $w={78}>Formulas</Tab>
      <Tab $w={48}>Data</Tab>
      <Tab $w={66}>Review</Tab>
      <Tab $w={50}>View</Tab>
      <Tab $w={82}>Developer</Tab>
      <Tab $w={50}>Help</Tab>
      <Tab $w={92}>Power Pivot</Tab>
      <TellMe><BulbI />Tell me what you want to do</TellMe>
      <Share><ShareI />Share<Chev c={W} /></Share>
    </Tabs>

    <Ribbon>
      <Group $w={103}>
        <GroupBody $pl={14}>
          <Large $w={30}>
            <LargeIcon><PasteI /></LargeIcon>
            <span>Paste</span>
            <Chev />
          </Large>
          <Stack $w={30}>
            <Tool $w={30} $ml={7}><CutI /></Tool>
            <Tool $w={30} $ml={7}><CopyI /></Tool>
            <Tool $w={30} $ml={7}><BrushI /></Tool>
          </Stack>
          <Stack $w={10}>
            <Tool $w={10} $ml={9} />
            <Tool $w={10} $ml={9}><Chev /></Tool>
          </Stack>
        </GroupBody>
        <GroupLabel $pr={18}>Clipboard<Launcher><LaunchI /></Launcher></GroupLabel>
      </Group>
      <Divider />

      <Group $w={231}>
        <GroupBody $pl={8}>
          <Rows>
            <Row>
              <Field $w={123}>Arial<Caret /></Field>
              <Field $w={43} $ml={2}>14<Caret /></Field>
              <Tool $w={20} $ml={3}><GrowI up /></Tool>
              <Tool $w={20} $ml={4}><GrowI /></Tool>
            </Row>
            <Row>
              <Tool $w={22} $on><Bold>B</Bold></Tool>
              <Tool $w={24}><Ital>I</Ital></Tool>
              <Tool $w={24}><Under>U</Under></Tool>
              <Tool $w={12}><Chev /></Tool>
              <Sep $ml={6} />
              <Tool $w={18} $ml={6}><BordersI /></Tool>
              <Tool $w={18}><Chev /></Tool>
              <Sep $ml={3} />
              <Tool $w={18} $ml={5}><FillI /></Tool>
              <Tool $w={18}><Chev /></Tool>
              <Tool $w={26}><ColorI /></Tool>
              <Tool $w={8}><Chev /></Tool>
            </Row>
          </Rows>
        </GroupBody>
        <GroupLabel $pr={17}>Font<Launcher><LaunchI /></Launcher></GroupLabel>
      </Group>
      <Divider />

      <Group $w={219}>
        <GroupBody $pl={7}>
          <Rows>
            <Row>
              <Tool $w={22}><Lines ys={[0, 3, 6]} x1s={[0, 0, 0]} x2s={[14, 14, 14]} /></Tool>
              <Tool $w={22} $ml={3} $on><AlignLines /></Tool>
              <Tool $w={22} $ml={2}><Lines ys={[5, 8, 11]} x1s={[0, 0, 0]} x2s={[14, 14, 14]} /></Tool>
              <Tool $w={22} $ml={4}><OrientI /></Tool>
              <Tool $w={10}><Chev /></Tool>
              <Tool $w={20} $ml={7}><RtlI /></Tool>
              <Tool $w={10} $ml={2}><Chev /></Tool>
              <Sep $ml={7} />
              <Tool $w={20} $ml={6}><WrapI /></Tool>
            </Row>
            <Row>
              <Tool $w={22}><AlignLines kind="left" /></Tool>
              <Tool $w={22} $ml={3} $on><AlignLines kind="center" /></Tool>
              <Tool $w={22} $ml={2}><AlignLines kind="right" /></Tool>
              <Tool $w={22} $ml={3}><IndentI /></Tool>
              <Tool $w={22} $ml={2}><IndentI out /></Tool>
              <Sep $ml={33} />
              <Tool $w={20} $ml={6}><MergeI /></Tool>
              <Tool $w={10} $ml={7}><Chev /></Tool>
            </Row>
          </Rows>
        </GroupBody>
        <GroupLabel $pr={17}>Alignment<Launcher><LaunchI /></Launcher></GroupLabel>
      </Group>
      <Divider />

      <Group $w={155}>
        <GroupBody $pl={8}>
          <Rows>
            <Row><Field $w={139}>Custom<Caret /></Field></Row>
            <Row>
              <Tool $w={22}><CurrI /></Tool>
              <Tool $w={10} $ml={1}><Chev /></Tool>
              <Tool $w={20} $ml={7}><Ico width="15" height="14" viewBox="0 0 15 14"><text x="0" y="12.5" fontFamily="Open Sans" fontSize="14" fill="#555">%</text></Ico></Tool>
              <Tool $w={20} $ml={3}><Ico width="5" height="9" viewBox="0 0 5 9"><path d="M1 1H4V4L2 8H1L2 4.5H1Z" fill="#444" /></Ico></Tool>
              <Sep $ml={6} />
              <Tool $w={20} $ml={4}><DecI inc /></Tool>
              <Tool $w={20} $ml={4}><DecI /></Tool>
            </Row>
          </Rows>
        </GroupBody>
        <GroupLabel $pr={15}>Number<Launcher><LaunchI /></Launcher></GroupLabel>
      </Group>
      <Divider />

      <Group $w={193}>
        <GroupBody $pl={5}>
          <Large $w={80}>
            <LargeIcon><CondI /></LargeIcon>
            <span>Conditional</span>
            <LineChev>Formatting<Chev /></LineChev>
          </Large>
          <Large $w={52}>
            <LargeIcon><TableI /></LargeIcon>
            <span>Format as</span>
            <LineChev>Table<Chev /></LineChev>
          </Large>
          <Large $w={52}>
            <LargeIcon><TableI plain /></LargeIcon>
            <span>Cell</span>
            <LineChev>Styles<Chev /></LineChev>
          </Large>
        </GroupBody>
        <GroupLabel>Styles</GroupLabel>
      </Group>
      <Divider />

      <Group $w={101}>
        <GroupBody $pl={11}>
          <Stack $w={80}>
            <Row><InsI mode="ins" /><SmallText $w={39}>Insert</SmallText><Tool $w={8} $ml={3}><Chev /></Tool></Row>
            <Row><InsI /><SmallText $w={43}>Delete</SmallText><Tool $w={8} $ml={3}><Chev /></Tool></Row>
            <Row><FmtI /><SmallText $w={40}>Format</SmallText><Tool $w={8}><Chev /></Tool></Row>
          </Stack>
        </GroupBody>
        <GroupLabel>Cells</GroupLabel>
      </Group>
      <Divider />

      <Group $w={150}>
        <GroupBody $pl={11}>
          <Stack $w={34}>
            <Row><SumI /><Tool $w={8} $ml={11}><Chev /></Tool></Row>
            <Row><FillDown /><Tool $w={8} $ml={4}><Chev /></Tool></Row>
            <Row><EraserI /><Tool $w={8} $ml={3}><Chev /></Tool></Row>
          </Stack>
          <Large $w={46} $ml={6}>
            <LargeIcon><SortI /></LargeIcon>
            <span>Sort &amp;</span>
            <LineChev>Filter<Chev /></LineChev>
          </Large>
          <Large $w={46}>
            <LargeIcon><FindI /></LargeIcon>
            <span>Find &amp;</span>
            <LineChev>Select<Chev /></LineChev>
          </Large>
        </GroupBody>
        <GroupLabel>Editing</GroupLabel>
      </Group>
      <Divider />

      <Group $w={62}>
        <GroupBody>
          <Large $w={62}>
            <LargeIcon><Ico width="12" height="26" viewBox="0 0 12 26"><circle cx="5.5" cy="14" r="5" fill="#f7931e" /></Ico></LargeIcon>
            <span>Add-ins</span>
          </Large>
        </GroupBody>
        <GroupLabel>Add-ins</GroupLabel>
      </Group>
      <Divider />
      <Collapse><Ico width="12" height="8" viewBox="0 0 12 8"><path d="M1 6.5 6 1.5 11 6.5" fill="none" stroke="#555" /></Ico></Collapse>
    </Ribbon>

    <FormulaBar>
      <NameBox>I13<Caret /></NameBox>
      <Dots>⋮</Dots>
      <FxBox>
        <Ico width="11" height="11" viewBox="0 0 11 11"><path d="M1 1 10 10M10 1 1 10" stroke="#bdbdbd" strokeWidth="1.6" /></Ico>
        <Ico width="14" height="11" viewBox="0 0 14 11"><path d="M1 6 5 10 13 1" fill="none" stroke="#bdbdbd" strokeWidth="1.8" /></Ico>
        <Fx>fx</Fx>
      </FxBox>
      <Formula>=(E13+I12)-(F13+H13)<Chev c="#666" s={10} /></Formula>
    </FormulaBar>

    <SheetWrap>
      <VScroll>
        <SBtn><Ico width="7" height="4" viewBox="0 0 7 4"><path d="M3.5 0 7 4H0Z" fill="#333" /></Ico></SBtn>
        <Thumb />
        <SDown><Ico width="7" height="4" viewBox="0 0 7 4"><path d="M0 0H7L3.5 4Z" fill="#333" /></Ico></SDown>
      </VScroll>
      <SheetGrid />
    </SheetWrap>

    <TabBar>
      <NavBox><Ico width="4" height="7" viewBox="0 0 4 7"><path d="M4 0V7L0 3.5Z" fill="#333" /></Ico></NavBox>
      <HTrack><HThumb /></HTrack>
      <NavBox><Ico width="4" height="7" viewBox="0 0 4 7"><path d="M0 0V7L4 3.5Z" fill="#333" /></Ico></NavBox>
      <TabDots>⋮</TabDots>
      <Tool $w={16} $h={27} $ml={5}>
        <Ico width="16" height="16" viewBox="0 0 16 16"><circle cx="8" cy="8" r="7.3" fill="none" stroke="#666" /><path d="M8 4V12M4 8H12" stroke="#666" /></Ico>
      </Tool>
      <More>...</More>
      {[20, 19, 18, 17, 16, 15, 14, 13, 12, 11, 10].map(n => <NumTab key={n} $w={38} $pl={4}>{n}</NumTab>)}
      {[9, 8, 7, 6, 5, 4, 3, 2].map(n => <NumTab key={n} $w={31} $pl={3}>{n}</NumTab>)}
      <ActiveTab><Txt $sx={0.9}>اسم العميل وتفاصيل حركاته</Txt></ActiveTab>
      <ColorTab>كشف حساب العملاء</ColorTab>
      <TabArrows>
        <Ico width="4" height="7" viewBox="0 0 4 7"><path d="M4 0V7L0 3.5Z" fill="#1a7a3d" /></Ico>
        <Ico width="4" height="7" viewBox="0 0 4 7"><path d="M0 0V7L4 3.5Z" fill="#c2c2c2" /></Ico>
      </TabArrows>
    </TabBar>

    <StatusBar>
      <span>Ready</span>
      <Tool $w={14} $h={20} $ml={21}><MacroI /></Tool>
      <Access><AccI />Accessibility: Investigate</Access>
      <Views>
        <ViewBtn $w={38} $on>
          <Ico width="14" height="14" viewBox="0 0 14 14"><path d="M.5.5H13.5V13.5H.5ZM.5 5H13.5M.5 9.5H13.5M5 .5V13.5M9.5 .5V13.5" fill="none" stroke="#666" /></Ico>
        </ViewBtn>
        <ViewBtn $w={40}><Ico width="12" height="14" viewBox="0 0 12 14"><path d="M.5.5H11.5V13.5H.5ZM3 3.5H9V10.5H3ZM4 5.5H8M4 7.5H8" fill="none" stroke="#666" /></Ico></ViewBtn>
        <ViewBtn $w={38}><Ico width="14" height="13" viewBox="0 0 14 13"><path d="M.5.5H13.5V12.5H.5ZM4.5.5V8H9.5V.5" fill="none" stroke="#666" /></Ico></ViewBtn>
      </Views>
      <ZoomMinus><Ico width="8" height="8" viewBox="0 0 8 8"><path d="M0 4H8" stroke="#444" /></Ico></ZoomMinus>
      <Slider><SliderThumb /><SliderTick /></Slider>
      <Ico width="8" height="8" viewBox="0 0 8 8"><path d="M0 4H8M4 0V8" stroke="#444" /></Ico>
      <Zoom>80%</Zoom>
    </StatusBar>

    <Taskbar>
      <StartBtn><WinLogo /></StartBtn>
      <Search><SearchI /><SearchText>Type here to search</SearchText><Jelly /></Search>
      <TaskIcon $w={40} $ml={7}><ChromeI /></TaskIcon>
      <TaskIcon $w={40} $ml={9}><FolderI /></TaskIcon>
      <TaskIcon $w={48} $ml={5} $on><ExcelI /></TaskIcon>
      <Tray>
        <EsrsI />
        <TrayText $ml={7}>ESRS</TrayText>
        <TrayText $ml={10} $c="#d9686a" $f={`"DejaVu Sans",sans-serif`}>%٥٥,٩٨-</TrayText>
        <Ico width="12" height="7" viewBox="0 0 12 7" style={{ marginLeft: "26px" }}><path d="M1 6.5 6 1 11 6.5" fill="none" stroke="#eee" /></Ico>
        <Tool $w={24} $ml={7}><Meet /></Tool>
        <Tool $w={24}><NetI /></Tool>
        <Tool $w={24}><VolI /></Tool>
        <Tool $w={24} $ml={3}><KeyI /></Tool>
        <TrayText $ml={20} $f={`"DejaVu Sans",sans-serif`}>ع</TrayText>
        <Clock><span>04:53 م</span><span>٢٠٢٦/٠٦/٠٩</span></Clock>
        <Tool $w={22} $ml={20}><NoteI /></Tool>
      </Tray>
    </Taskbar>

    <Watermark>
      <WmAr>مستقل</WmAr>
      <WmEn>mostaql.com</WmEn>
    </Watermark>
  </Page>
);

export default App;
